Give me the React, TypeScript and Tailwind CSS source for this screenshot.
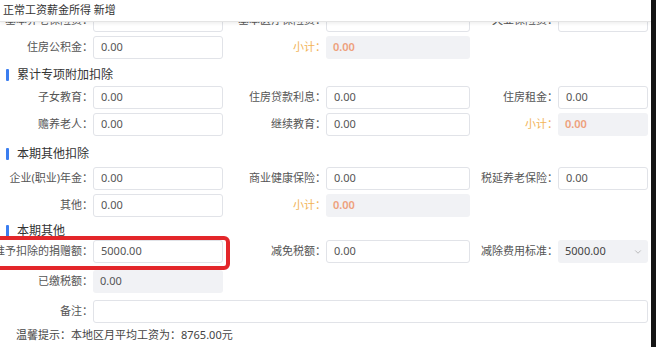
import React from "react";
import { ChevronDown } from "lucide-react";

type FieldProps = {
  label: string;
  lw: string;
  iw: string;
  value?: string;
  kind?: "input" | "sum" | "gray" | "select";
  orangeLabel?: boolean;
};

function Field({ label, lw, iw, value = "", kind = "input", orangeLabel }: FieldProps) {
  return (
    <>
      <div className={`flex shrink-0 justify-end ${lw}`}>
        <span
          className={`whitespace-nowrap text-[11px] ${orangeLabel ? "text-[#f2b457]" : "text-[#555]"}`}
        >
          {label}
        </span>
      </div>
      {kind === "input" && (
        <div
          className={`flex h-[23px] shrink-0 items-center rounded-[3px] border border-[#e1e3e8] bg-white pl-[7px] text-[11px] text-[#555] ${iw}`}
        >
          {value}
        </div>
      )}
      {kind === "sum" && (
        <div
          className={`flex h-[23px] shrink-0 items-center rounded-[3px] bg-[#f1f2f5] pl-[7px] text-[11px] font-semibold text-[#eea07c] ${iw}`}
        >
          {value}
        </div>
      )}
      {kind === "gray" && (
        <div
          className={`flex h-[23px] shrink-0 items-center rounded-[3px] bg-[#f1f2f5] pl-[7px] text-[11px] text-[#555] ${iw}`}
        >
          {value}
        </div>
      )}
      {kind === "select" && (
        <div
          className={`flex h-[23px] shrink-0 items-center justify-between rounded-[3px] bg-[#f1f2f5] pl-[7px] pr-[5px] text-[11px] text-[#444] ${iw}`}
        >
          <span>{value}</span>
          <ChevronDown size={10} strokeWidth={1.5} color="#999" />
        </div>
      )}
    </>
  );
}

function Section({ title, h }: { title: string; h: string }) {
  return (
    <div className={`flex items-center ${h}`}>
      <div className="ml-[6px] h-[12px] w-[3px] rounded-[1px] bg-[#3b7ef0]" />
      <span className="ml-[8px] text-[12px] text-[#333]">{title}</span>
    </div>
  );
}

const C1L = "w-[93px]";
const C1I = "w-[130px]";
const C2L = "w-[103px]";
const C2I = "w-[144px]";
const C3L = "w-[88px]";
const C3I = "w-[90px]";

export default function App() {
  return (
    <div className="flex h-[347px] w-[656px] overflow-hidden bg-white font-['Noto_Sans','Noto_Sans_CJK_SC',sans-serif]">
      <div className="relative flex h-full w-[651px] flex-col">
        <div className="relative z-10 flex h-[22px] shrink-0 items-center border-b border-[#e4e4e4] bg-white pl-[3px] text-[11px] text-[#333] shadow-[0_2px_3px_rgba(0,0,0,0.06)]">
          正常工资薪金所得 新增
        </div>
        <div className="flex-1 overflow-hidden">
          <div className="-mt-[13px] flex flex-col">
            <div className="flex h-[23px] items-center">
              <Field label="基本养老保险费：" lw={C1L} iw={C1I} value="" />
              <Field label="基本医疗保险费：" lw={C2L} iw={C2I} value="" />
              <Field label="失业保险费：" lw={C3L} iw={C3I} value="" />
            </div>
            <div className="mt-[4px] flex h-[23px] items-center">
              <Field label="住房公积金：" lw={C1L} iw={C1I} value="0.00" />
              <Field label="小计：" lw={C2L} iw={C2I} value="0.00" kind="sum" orangeLabel />
            </div>
            <div className="mt-[4px]">
              <Section title="累计专项附加扣除" h="h-[23px]" />
            </div>
            <div className="flex h-[23px] items-center">
              <Field label="子女教育：" lw={C1L} iw={C1I} value="0.00" />
              <Field label="住房贷款利息：" lw={C2L} iw={C2I} value="0.00" />
              <Field label="住房租金：" lw={C3L} iw={C3I} value="0.00" />
            </div>
            <div className="mt-[4px] flex h-[23px] items-center">
              <Field label="赡养老人：" lw={C1L} iw={C1I} value="0.00" />
              <Field label="继续教育：" lw={C2L} iw={C2I} value="0.00" />
              <Field label="小计：" lw={C3L} iw={C3I} value="0.00" kind="sum" orangeLabel />
            </div>
            <div className="mt-[4px]">
              <Section title="本期其他扣除" h="h-[27px]" />
            </div>
            <div className="flex h-[23px] items-center">
              <Field label="企业(职业)年金：" lw={C1L} iw={C1I} value="0.00" />
              <Field label="商业健康保险：" lw={C2L} iw={C2I} value="0.00" />
              <Field label="税延养老保险：" lw={C3L} iw={C3I} value="0.00" />
            </div>
            <div className="mt-[4px] flex h-[23px] items-center">
              <Field label="其他：" lw={C1L} iw={C1I} value="0.00" />
              <Field label="小计：" lw={C2L} iw={C2I} value="0.00" kind="sum" orangeLabel />
            </div>
            <div className="mt-[4px]">
              <Section title="本期其他" h="h-[19px]" />
            </div>
            <div className="flex h-[23px] items-center">
              <Field label="准予扣除的捐赠额：" lw={C1L} iw={C1I} value="5000.00" />
              <Field label="减免税额：" lw={C2L} iw={C2I} value="0.00" />
              <Field label="减除费用标准：" lw={C3L} iw={C3I} value="5000.00" kind="select" />
            </div>
            <div className="mt-[7px] flex h-[23px] items-center">
              <Field label="已缴税额：" lw={C1L} iw={C1I} value="0.00" kind="gray" />
            </div>
            <div className="mt-[7px] flex h-[23px] items-center">
              <Field label="备注：" lw={C1L} iw="w-[555px]" value="" />
            </div>
            <div className="mt-[4px] h-[16px] pl-[16px] text-[11px] leading-[16px] text-[#444]">
              温馨提示：本地区月平均工资为：8765.00元
            </div>
          </div>
        </div>
        <div className="absolute left-[-10px] top-[236px] h-[34px] w-[240px] rounded-[6px] border-[4px] border-[#e3262a]" />
      </div>
      <div className="h-full w-[5px] bg-[#141414]" />
    </div>
  );
}
